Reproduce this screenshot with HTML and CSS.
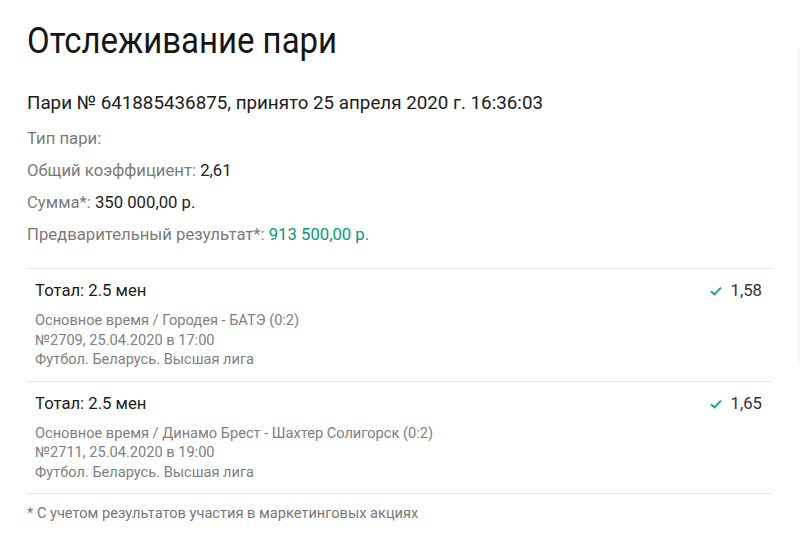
FILE: index.html
```html
<!DOCTYPE html>
<html lang="ru">
<head>
<meta charset="utf-8">
<title>Отслеживание пари</title>
<link rel="stylesheet" href="styles.css">
</head>
<body>
<main class="tracking">
  <h1 class="tracking__title">Отслеживание пари</h1>
  <p class="tracking__bet">Пари № 641885436875, принято 25 апреля 2020 г. 16:36:03</p>
  <ul class="summary">
    <li class="summary__item"><span class="summary__label">Тип пари:</span></li>
    <li class="summary__item"><span class="summary__label">Общий коэффициент:</span> <span class="summary__value">2,61</span></li>
    <li class="summary__item"><span class="summary__label">Сумма*:</span> <span class="summary__value">350 000,00 р.</span></li>
    <li class="summary__item"><span class="summary__label">Предварительный результат*:</span> <span class="summary__value summary__value--win">913 500,00 р.</span></li>
  </ul>
  <div class="events">
    <div class="event">
      <div class="event__head">
        <span class="event__outcome">Тотал: 2.5 мен</span>
        <span class="event__odds">
          <svg class="event__check" viewBox="0 0 12 10" width="12" height="10"><path d="M1 5.2 L4.4 8.4 L11 1.6" fill="none" stroke="currentColor" stroke-width="2"/></svg>
          1,58
        </span>
      </div>
      <div class="event__info">
        <div>Основное время / Городея - БАТЭ (0:2)</div>
        <div>№2709, 25.04.2020 в 17:00</div>
        <div>Футбол. Беларусь. Высшая лига</div>
      </div>
    </div>
    <div class="event">
      <div class="event__head">
        <span class="event__outcome">Тотал: 2.5 мен</span>
        <span class="event__odds">
          <svg class="event__check" viewBox="0 0 12 10" width="12" height="10"><path d="M1 5.2 L4.4 8.4 L11 1.6" fill="none" stroke="currentColor" stroke-width="2"/></svg>
          1,65
        </span>
      </div>
      <div class="event__info">
        <div>Основное время / Динамо Брест - Шахтер Солигорск (0:2)</div>
        <div>№2711, 25.04.2020 в 19:00</div>
        <div>Футбол. Беларусь. Высшая лига</div>
      </div>
    </div>
  </div>
  <p class="tracking__note">* С учетом результатов участия в маркетинговых акциях</p>
</main>
<div class="side-edge"></div>
</body>
</html>
```
FILE: styles.css
```css
html, body {
  margin: 0;
  background: #fff;
}

body {
  font-family: Roboto, "Noto Sans", sans-serif;
  color: #222;
  position: relative;
  min-height: 540px;
  overflow: hidden;
}

.tracking {
  padding: 20px 28px 0 27px;
}

/* heading face is narrower than the body text */
.tracking__title {
  margin: 0;
  font-size: 36px;
  line-height: 42px;
  font-weight: 400;
  color: #151515;
  transform: scaleX(0.915);
  transform-origin: left center;
  white-space: nowrap;
}

.tracking__bet {
  margin: 29px 0 0;
  font-size: 18.8px;
  line-height: 24px;
  color: #1c1c1c;
}

.summary {
  list-style: none;
  margin: 8px 0 0;
  padding: 0;
}

.summary__item {
  font-size: 16.7px;
  line-height: 32px;
}

.summary__label {
  color: #7b7b7b;
}

.summary__value {
  color: #222;
}

.summary__value--win {
  color: #05987c;
}

.events {
  margin-top: 17px;
  border-top: 1px solid #e6e6e6;
}

.event {
  padding: 11px 10px 11px 8px;
  border-bottom: 1px solid #e6e6e6;
}

.event__head {
  display: flex;
  justify-content: space-between;
  align-items: center;
  font-size: 16.7px;
  line-height: 22px;
  color: #1c1c1c;
}

.event__odds {
  display: flex;
  align-items: center;
  gap: 9px;
  color: #333;
}

.event__check {
  color: #16a877;
}

.event__info {
  margin-top: 9px;
  font-size: 14.6px;
  line-height: 19.5px;
  color: #808080;
}

.tracking__note {
  margin: 9px 0 0;
  font-size: 14.6px;
  line-height: 20px;
  color: #777;
}

/* edge of the neighbouring panel */
.side-edge {
  position: absolute;
  top: 48px;
  right: 0;
  width: 4px;
  height: 318px;
  background: linear-gradient(to right, rgba(0,0,0,0), rgba(0,0,0,0.04));
}
```
